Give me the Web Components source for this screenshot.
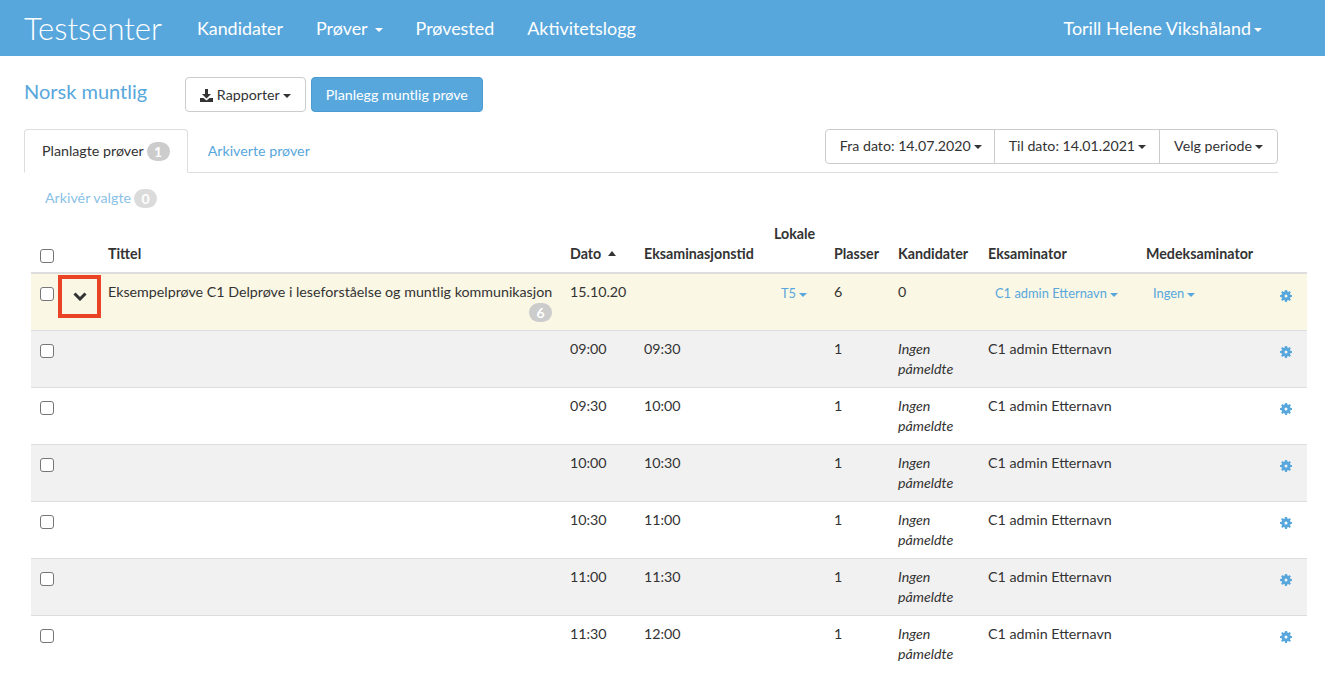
<!DOCTYPE html>
<html lang="no">
<head>
<meta charset="utf-8">
<title>Testsenter</title>
<style>
    html, body { margin: 0; height: 100%; overflow: hidden; background: #fff; }
    body { font: 14.25px/20px Lato, "Liberation Sans", sans-serif; color: #333; --blue: #58a7dc; --cols: 68px 462px 74px 130px 60px 64px 90px 158px 134px 36px; }
</style>
</head>
<body>
<test-navbar></test-navbar>
<page-toolbar></page-toolbar>
<exam-tabs></exam-tabs>
<exam-table>
    <exam-row kind="parent" time="15.10.20" places="6" candidates="0"></exam-row>
    <exam-row kind="even" time="09:00" end="09:30"></exam-row>
    <exam-row kind="odd" time="09:30" end="10:00"></exam-row>
    <exam-row kind="even" time="10:00" end="10:30"></exam-row>
    <exam-row kind="odd" time="10:30" end="11:00"></exam-row>
    <exam-row kind="even" time="11:00" end="11:30"></exam-row>
    <exam-row kind="odd" time="11:30" end="12:00"></exam-row>
</exam-table>

<script>
class DropCaret extends HTMLElement {
    constructor() {
        super();
        this.attachShadow({ mode: 'open' });
        this.shadowRoot.innerHTML = `
            <style>
                :host { display: inline-block; width: 0; height: 0; margin-left: 3px; vertical-align: middle; border-top: 4px solid currentColor; border-left: 4px solid transparent; border-right: 4px solid transparent; }
            </style>`;
    }
}

class CountBadge extends HTMLElement {
    constructor() {
        super();
        this.attachShadow({ mode: 'open' });
        this.shadowRoot.innerHTML = `
            <style>
                :host { display: inline-block; min-width: 9px; padding: 0 7px; height: 19px; line-height: 19px; border-radius: 10px; background: #ccc; color: #fff; font-weight: 700; font-size: 14px; text-align: center; vertical-align: -1px; }
            </style>
            <slot></slot>`;
    }
}

class GearIcon extends HTMLElement {
    constructor() {
        super();
        this.attachShadow({ mode: 'open' });
        let teeth = '';
        for (let a = 0; a < 360; a += 45) {
            teeth += `<rect x="4.9" y="0" width="2.2" height="3" rx=".4" transform="rotate(${a} 6 6)"/>`;
        }
        this.shadowRoot.innerHTML = `
            <style>
                :host { display: inline-block; width: 12px; height: 12px; color: var(--blue); }
                svg { display: block; }
            </style>
            <svg width="12" height="12" viewBox="0 0 12 12" fill="currentColor">
                ${teeth}
                <circle cx="6" cy="6" r="3.100" fill="none" stroke="currentColor" stroke-width="3.200"/>
            </svg>`;
    }
}

class TestNavbar extends HTMLElement {
    constructor() {
        super();
        this.attachShadow({ mode: 'open' });
        this.shadowRoot.innerHTML = `
            <style>
                :host { display: flex; align-items: center; height: 56px; padding: 0 63px 0 24px; background: var(--blue); color: #fff; font-size: 17.900px; }
                .brand { font-size: 31px; font-weight: 300; margin-right: 35px; }
                nav { display: flex; gap: 33px; flex: 1; }
                nav drop-caret { margin-left: 7px; }
            </style>
            <span class="brand">Testsenter</span>
            <nav>
                <span>Kandidater</span>
                <span>Prøver<drop-caret></drop-caret></span>
                <span>Prøvested</span>
                <span>Aktivitetslogg</span>
            </nav>
            <span>Torill Helene Vikshåland<drop-caret></drop-caret></span>`;
    }
}

class PageToolbar extends HTMLElement {
    constructor() {
        super();
        this.attachShadow({ mode: 'open' });
        this.shadowRoot.innerHTML = `
            <style>
                :host { display: flex; align-items: center; padding: 21px 24px 17px; }
                h1 { margin: 0 38px 0 0; font-size: 20px; line-height: 30px; font-weight: 400; color: var(--blue); position: relative; top: -4px; }
                button { font: inherit; height: 35px; padding: 0 14px; border-radius: 4px; border: 1px solid #ccc; background: #fff; color: #333; margin-right: 5px; }
                button.primary { background: var(--blue); border-color: #4a9bd2; color: #fff; }
                svg { vertical-align: -2px; }
            </style>
            <h1>Norsk muntlig</h1>
            <button>
                <svg width="13" height="13" viewBox="0 0 13 13" fill="#333"><path d="M5 0h3v5h3L6.500 9.500 2 5h3z"/><path d="M0 9h3.500l3 2.500 3-2.500H13v4H0z"/></svg>
                Rapporter<drop-caret></drop-caret>
            </button>
            <button class="primary">Planlegg muntlig prøve</button>`;
    }
}

class ExamTabs extends HTMLElement {
    constructor() {
        super();
        this.attachShadow({ mode: 'open' });
        this.shadowRoot.innerHTML = `
            <style>
                :host { display: block; }
                .bar { display: flex; margin: 0 47px 0 24px; height: 43px; border-bottom: 1px solid #ddd; }
                .tab { height: 44px; box-sizing: border-box; padding: 12px 17px 0; }
                .active { border: 1px solid #ddd; border-bottom-color: #fff; border-radius: 4px 4px 0 0; background: #fff; padding-top: 11px; }
                .link { color: var(--blue); padding-left: 20px; }
                .dates { margin-left: auto; display: flex; height: 35px; box-sizing: border-box; border: 1px solid #ccc; border-radius: 4px; font-size: 14.200px; }
                .dates span { padding: 6px 13px 0 14px; border-left: 1px solid #ccc; }
                .dates span:first-child { border-left: 0; padding-right: 12px; }
                .dates span:last-child { padding-right: 14px; }
                .archive { height: 28px; padding: 15px 0 0 45px; color: var(--blue); }
                .archive .txt { opacity: .7; }
                .archive count-badge { opacity: .7; }
                count-badge { margin-left: 3px; }
            </style>
            <div class="bar">
                <div class="tab active">Planlagte prøver<count-badge>1</count-badge></div>
                <div class="tab link">Arkiverte prøver</div>
                <div class="dates">
                    <span>Fra dato: 14.07.2020<drop-caret></drop-caret></span>
                    <span>Til dato: 14.01.2021<drop-caret></drop-caret></span>
                    <span>Velg periode<drop-caret></drop-caret></span>
                </div>
            </div>
            <div class="archive"><span class="txt">Arkivér valgte</span><count-badge>0</count-badge></div>`;
    }
}

class ExamTable extends HTMLElement {
    constructor() {
        super();
        this.attachShadow({ mode: 'open' });
        this.shadowRoot.innerHTML = `
            <style>
                :host { display: block; margin-left: 31px; width: 1276px; }
                .head { display: grid; grid-template-columns: var(--cols); align-items: end; padding: 8px 0 8px 9px; border-bottom: 2px solid #ddd; font-weight: 700; }
                .head .up { padding-bottom: 20px; }
                input { appearance: none; display: block; width: 14px; height: 14px; margin: 0 0 1px; border: 1px solid #767676; border-radius: 3px; background: #fff; box-sizing: border-box; }
                .sort { display: inline-block; margin-left: 3px; vertical-align: 3px; border-bottom: 5px solid #333; border-left: 4.500px solid transparent; border-right: 4.500px solid transparent; }
            </style>
            <div class="head">
                <div><input type="checkbox"></div>
                <div>Tittel</div>
                <div>Dato <i class="sort"></i></div>
                <div>Eksaminasjonstid</div>
                <div class="up">Lokale</div>
                <div>Plasser</div>
                <div>Kandidater</div>
                <div>Eksaminator</div>
                <div>Medeksaminator</div>
                <div></div>
            </div>
            <slot></slot>`;
    }
}

class ExamRow extends HTMLElement {
    constructor() {
        super();
        this.attachShadow({ mode: 'open' });
    }

    connectedCallback() {
        this.render();
    }

    render() {
        const kind = this.getAttribute('kind');
        const time = this.getAttribute('time');
        const end = this.getAttribute('end') || '';
        const isParent = kind === 'parent';

        let cells = '';
        if (isParent) {
            cells = `
                <div class="expand"><svg width="14" height="9" viewBox="0 0 14 9"><path d="M1.500 1.500 7 7l5.500-5.500" fill="none" stroke="#333" stroke-width="3"/></svg></div>
                <div class="title">Eksempelprøve C1 Delprøve i leseforståelse og muntlig kommunikasjon<div class="count"><count-badge>6</count-badge></div></div>
                <div>${time}</div>
                <div></div>
                <div class="pick">T5<drop-caret></drop-caret></div>
                <div>${this.getAttribute('places')}</div>
                <div>${this.getAttribute('candidates')}</div>
                <div class="pick">C1 admin Etternavn<drop-caret></drop-caret></div>
                <div class="pick">Ingen<drop-caret></drop-caret></div>`;
        } else {
            cells = `
                <div></div>
                <div>${time}</div>
                <div>${end}</div>
                <div></div>
                <div>1</div>
                <div class="none">Ingen påmeldte</div>
                <div>C1 admin Etternavn</div>
                <div></div>`;
        }

        this.shadowRoot.innerHTML = `
            <style>
                :host { display: grid; grid-template-columns: var(--cols); padding: 8px 0 8px 9px; height: 40px; border-bottom: 1px solid #ddd; background: ${isParent ? '#faf7e4' : kind === 'even' ? '#f1f1f1' : '#fff'}; position: relative; }
                :host(:last-child) { border-bottom-color: transparent; }
                input { appearance: none; display: block; width: 14px; height: 14px; margin: 5px 0 0; border: 1px solid #767676; border-radius: 3px; background: #fff; box-sizing: border-box; }
                .expand { position: absolute; left: 27px; top: 1px; width: 43px; height: 43px; box-sizing: border-box; border: 4px solid #ea4325; display: flex; align-items: center; justify-content: center; padding-bottom: 1px; }
                .title { padding-right: 18px; white-space: nowrap; }
                .count { text-align: right; }
                .pick { color: var(--blue); font-size: 12.900px; line-height: 22px; padding-left: 7px; }
                .none { font-style: italic; width: 70px; }
                gear-icon { margin: ${isParent ? 8 : 7}px 0 0; }
            </style>
            <div><input type="checkbox"></div>
            ${cells}
            <div><gear-icon></gear-icon></div>`;
    }
}

customElements.define('drop-caret', DropCaret);
customElements.define('count-badge', CountBadge);
customElements.define('gear-icon', GearIcon);
customElements.define('test-navbar', TestNavbar);
customElements.define('page-toolbar', PageToolbar);
customElements.define('exam-tabs', ExamTabs);
customElements.define('exam-table', ExamTable);
customElements.define('exam-row', ExamRow);
</script>
</body>
</html>
